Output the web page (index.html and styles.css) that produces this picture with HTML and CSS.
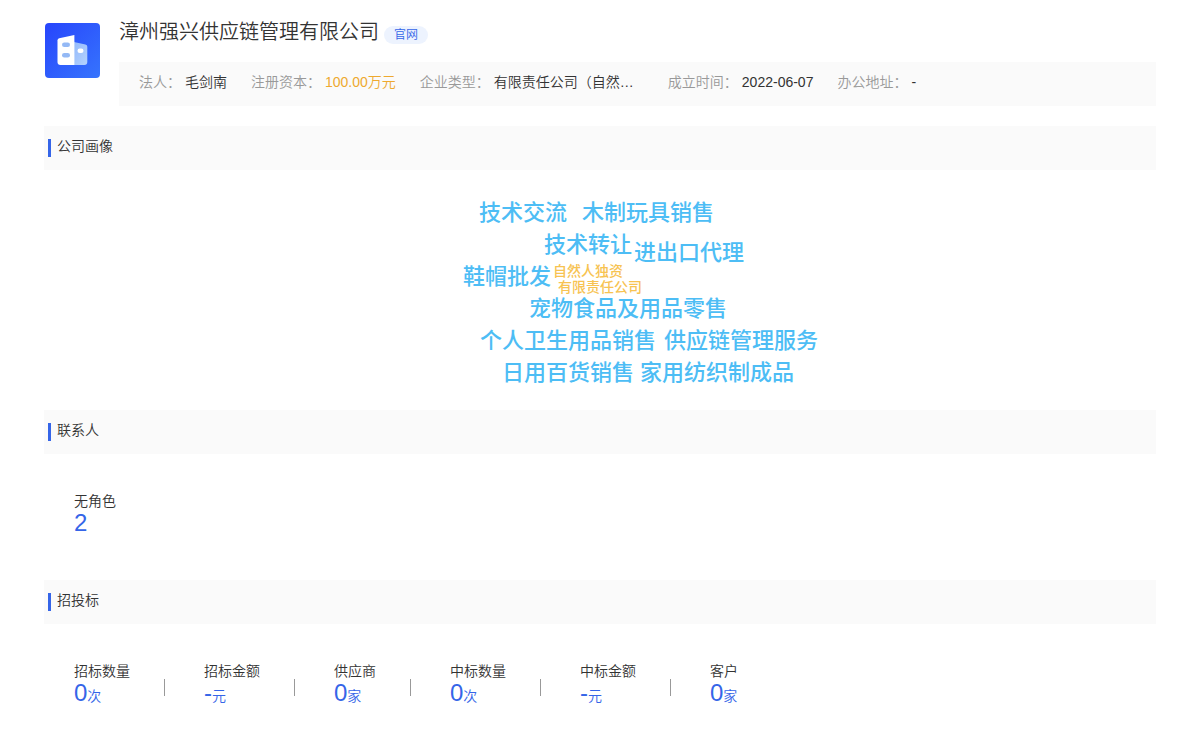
FILE: index.html
```html
<!DOCTYPE html>
<html lang="zh-CN">
<head>
<meta charset="utf-8">
<title>漳州强兴供应链管理有限公司</title>
<link rel="stylesheet" href="styles.css">
</head>
<body>
<main class="page">
  <header class="company">
    <svg class="logo" viewBox="0 0 55 55" aria-hidden="true">
      <defs>
        <linearGradient id="bg" x1="0" y1="0" x2="1" y2="1"><stop offset="0" stop-color="#2745fc"/><stop offset="1" stop-color="#3674fd"/></linearGradient>
        <linearGradient id="side" x1="0" y1="0" x2="1" y2="1"><stop offset="0" stop-color="#94bafb"/><stop offset="1" stop-color="#b4d2fe"/></linearGradient>
      </defs>
      <rect width="55" height="55" rx="4" fill="url(#bg)"/>
      <path d="M29 19l11.400 2.500q1.900.5 1.900 2.300V39q0 3-3 3H29z" fill="url(#side)"/>
      <path d="M14.200 15.200L29.400 12V42H15.500q-3 0-3-3V17.500q0-1.900 1.700-2.300z" fill="#fff"/>
      <rect x="17" y="19.500" width="8" height="4.500" rx="2.250" fill="#94b9f5"/>
      <rect x="17" y="30" width="8" height="4.500" rx="2.250" fill="#94b9f5"/>
      <rect x="32.500" y="25.500" width="6" height="4.500" rx="2.250" fill="#fff"/>
    </svg>
    <div class="company-main">
      <div class="title-row">
        <h1 class="name">漳州强兴供应链管理有限公司</h1>
        <a class="site" href="#">官网</a>
      </div>
      <dl class="facts">
        <div class="fact"><dt>法人：</dt><dd>毛剑南</dd></div>
        <div class="fact"><dt>注册资本：</dt><dd class="money">100.00万元</dd></div>
        <div class="fact fact-type"><dt>企业类型：</dt><dd>有限责任公司（自然…</dd></div>
        <div class="fact"><dt>成立时间：</dt><dd>2022-06-07</dd></div>
        <div class="fact"><dt>办公地址：</dt><dd>-</dd></div>
      </dl>
    </div>
  </header>

  <section>
    <h2 class="bar">公司画像</h2>
    <div class="cloud-area">
      <div class="cloud">
        <span class="tag t1">技术交流</span>
        <span class="tag t2">木制玩具销售</span>
        <span class="tag t3">技术转让</span>
        <span class="tag t4">进出口代理</span>
        <span class="tag t5">鞋帽批发</span>
        <span class="tag minor t6">自然人独资</span>
        <span class="tag minor t7">有限责任公司</span>
        <span class="tag t8">宠物食品及用品零售</span>
        <span class="tag t9">个人卫生用品销售</span>
        <span class="tag t10">供应链管理服务</span>
        <span class="tag t11">日用百货销售</span>
        <span class="tag t12">家用纺织制成品</span>
      </div>
    </div>
  </section>

  <section>
    <h2 class="bar">联系人</h2>
    <dl class="stats">
      <div class="stat"><dt>无角色</dt><dd>2</dd></div>
    </dl>
  </section>

  <section>
    <h2 class="bar">招投标</h2>
    <dl class="stats">
      <div class="stat"><dt>招标数量</dt><dd>0<small>次</small></dd></div>
      <div class="stat"><dt>招标金额</dt><dd>-<small>元</small></dd></div>
      <div class="stat"><dt>供应商</dt><dd>0<small>家</small></dd></div>
      <div class="stat"><dt>中标数量</dt><dd>0<small>次</small></dd></div>
      <div class="stat"><dt>中标金额</dt><dd>-<small>元</small></dd></div>
      <div class="stat"><dt>客户</dt><dd>0<small>家</small></dd></div>
    </dl>
  </section>
</main>
</body>
</html>
```
FILE: styles.css
```css
* {
  box-sizing: border-box;
}

body {
  margin: 0;
  background: #fff;
  color: #333;
  font: 350 14px/20px "Liberation Sans", "Noto Sans CJK SC", sans-serif;
}

h1, h2, dl, dd {
  margin: 0;
  font-weight: 350;
}

.page {
  padding: 16px 44px 0;
}

.company {
  display: flex;
  gap: 19px;
  margin-bottom: 20px;
}

.logo {
  flex: none;
  width: 55px;
  height: 55px;
  margin: 7px 0 0 1px;
}

.company-main {
  flex: 1;
  min-width: 0;
}

.title-row {
  display: flex;
  align-items: center;
  gap: 5px;
  height: 46px;
  padding-bottom: 14px;
}

.name {
  font-size: 20px;
  line-height: 30px;
}

.site {
  margin-top: 6px;
  padding: 0 10px;
  border-radius: 9px;
  background: #edf3fe;
  color: #3565e8;
  font-size: 12px;
  line-height: 18px;
  text-decoration: none;
}

.facts {
  display: flex;
  height: 44px;
  padding: 10px 20px;
  background: #fafafa;
}

.fact {
  display: flex;
  gap: 4px;
  margin-right: 24px;
  white-space: nowrap;
}

.fact dt {
  color: #999;
}

.fact-type {
  margin-right: 34px;
}

.fact .money {
  color: #eea92f;
}

.bar {
  display: flex;
  align-items: center;
  height: 44px;
  padding: 0 4px 4px;
  background: #fafafa;
  font-size: 14px;
}

.bar::before {
  width: 3px;
  height: 18px;
  margin: 4px 6px 0 0;
  background: #3565e8;
  content: "";
}

.cloud-area {
  display: flex;
  justify-content: center;
  height: 240px;
  padding-top: 27px;
}

.cloud {
  position: relative;
  width: 400px;
  height: 200px;
}

.tag {
  position: absolute;
  color: #4dbdf5;
  font-size: 22px;
  font-weight: 500;
  line-height: 32px;
  white-space: nowrap;
}

.minor {
  color: #f7c352;
  font-size: 14px;
  line-height: 16px;
}

.t1 { left: 79px; top: 0; }
.t2 { left: 182px; top: 0; }
.t3 { left: 144px; top: 32px; }
.t4 { left: 234px; top: 40px; }
.t5 { left: 63px; top: 64px; }
.t6 { left: 153px; top: 66px; }
.t7 { left: 158px; top: 82px; }
.t8 { left: 129px; top: 96px; }
.t9 { left: 80px; top: 128px; }
.t10 { left: 264px; top: 128px; }
.t11 { left: 102px; top: 160px; }
.t12 { left: 240px; top: 160px; }

.stats {
  display: flex;
  height: 126px;
  padding: 37px 30px 0;
}

.stat {
  display: flex;
  flex-direction: column;
  position: relative;
  margin-right: 74px;
}

.stat:not(:last-child)::after {
  position: absolute;
  right: -35px;
  top: 18px;
  width: 1px;
  height: 17px;
  background: #999;
  content: "";
}

.stat dd {
  color: #3565e8;
  font-size: 24px;
  line-height: 24px;
}

.stat small {
  font-size: 14px;
}
```
